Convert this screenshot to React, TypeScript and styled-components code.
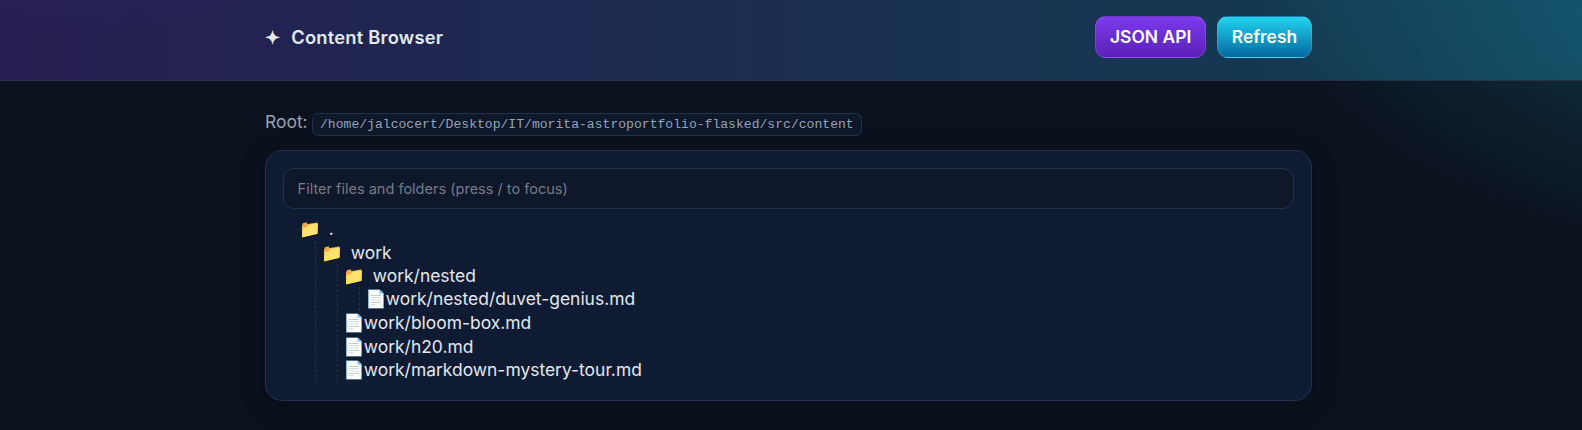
import React from 'react';
import styled, { createGlobalStyle } from 'styled-components';

const GlobalStyle = createGlobalStyle`
  * { box-sizing: border-box; }
  html, body { margin: 0; min-height: 100vh; }
  body {
    font: 17.4545px/23.5px Inter, "Noto Color Emoji", sans-serif;
    color: #e2e8f0;
    background:
      radial-gradient(1309px 655px at 0% -68%, rgba(104, 78, 237, 0.38), transparent 50%),
      radial-gradient(1309px 655px at 120% -10%, rgba(34, 200, 238, 0.32), transparent 49%),
      #0b121e;
  }
`;

const Header = styled.header`
  height: 81px;
  border-bottom: 1px solid #24304d;
  background: linear-gradient(90deg, rgba(120, 66, 236, 0.24), rgba(34, 200, 242, 0.25));
`;

const Container = styled.div`
  width: 1047px;
  margin-left: 265px;
`;

const Bar = styled(Container)`
  height: 74px;
  display: flex;
  align-items: center;
  justify-content: space-between;
`;

const Brand = styled.div`
  display: flex;
  align-items: center;
  gap: 11px;
  padding-top: 1px;
  font-size: 18.33px;
  font-weight: 600;
  letter-spacing: 0.22px;
`;

const Actions = styled.nav`
  display: flex;
  gap: 11px;
`;

const Button = styled.a<{ $from: string; $to: string }>`
  height: 42px;
  padding: 0 13.8px;
  display: flex;
  align-items: center;
  border: 1px solid rgba(255, 255, 255, 0.12);
  border-radius: 11px;
  background: linear-gradient(180deg, ${(p) => p.$from}, ${(p) => p.$to});
  color: #fff;
  font-weight: 600;
  text-decoration: none;
`;

const Root = styled.div`
  height: 69px;
  padding-top: 29px;
  color: #94a3b8;
`;

const Path = styled.code`
  margin-left: -1px;
  padding: 3px 7.5px;
  border: 1px solid #24304d;
  border-radius: 6.5px;
  background: #0f172a;
  font: 13.09px "Liberation Mono", monospace;
`;

const Card = styled.section`
  height: 251px;
  padding: 17px;
  border: 1px solid #24304d;
  border-radius: 17px;
  background: #0f1b33;
  box-shadow: 0 6px 24px rgba(0, 0, 0, 0.25);
`;

const Filter = styled.input`
  display: block;
  width: 100%;
  height: 41px;
  padding: 0 13.6px;
  border: 1px solid #24304d;
  border-radius: 11px;
  outline: none;
  background: #0f172a;
  color: #e2e8f0;
  font: 14.545px Inter, sans-serif;
  &::placeholder { color: #757b87; opacity: 1; }
`;

const Tree = styled.ul`
  margin: 8.4px 0 0;
  padding: 0 0 0 16px;
  list-style: none;
`;

const Branch = styled.ul`
  margin: 0 0 0 16px;
  padding: 0 0 0 5px;
  border-left: 1px dashed #24304d;
  list-style: none;
`;

const Row = styled.div<{ $folder: boolean }>`
  display: flex;
  height: ${(p) => (p.$folder ? 23.33 : 23.67)}px;
  align-items: center;
  white-space: nowrap;
`;

const Icon = styled.span<{ $folder: boolean }>`
  width: ${(p) => (p.$folder ? 29.8 : 20.8)}px;
`;

type Entry = { name: string; children?: Entry[] };

const entries: Entry = {
  name: '.',
  children: [
    {
      name: 'work',
      children: [
        { name: 'work/nested', children: [{ name: 'work/nested/duvet-genius.md' }] },
        { name: 'work/bloom-box.md' },
        { name: 'work/h20.md' },
        { name: 'work/markdown-mystery-tour.md' },
      ],
    },
  ],
};

function Node({ entry }: { entry: Entry }) {
  const folder = !!entry.children;
  return (
    <li>
      <Row $folder={folder}>
        <Icon $folder={folder}>{folder ? '📁' : '📄'}</Icon>
        <span>{entry.name}</span>
      </Row>
      {entry.children && (
        <Branch>
          {entry.children.map((child) => (
            <Node key={child.name} entry={child} />
          ))}
        </Branch>
      )}
    </li>
  );
}

export default function App() {
  return (
    <>
      <GlobalStyle />
      <Header>
        <Bar>
          <Brand>
            <span>✦</span>
            <span>Content Browser</span>
          </Brand>
          <Actions>
            <Button $from="#7c3aed" $to="#5b21b6">JSON API</Button>
            <Button $from="#22d3ee" $to="#0369a1">Refresh</Button>
          </Actions>
        </Bar>
      </Header>
      <Container as="main">
        <Root>
          Root: <Path>/home/jalcocert/Desktop/IT/morita-astroportfolio-flasked/src/content</Path>
        </Root>
        <Card>
          <Filter placeholder="Filter files and folders (press / to focus)" />
          <Tree>
            <Node entry={entries} />
          </Tree>
        </Card>
      </Container>
    </>
  );
}
